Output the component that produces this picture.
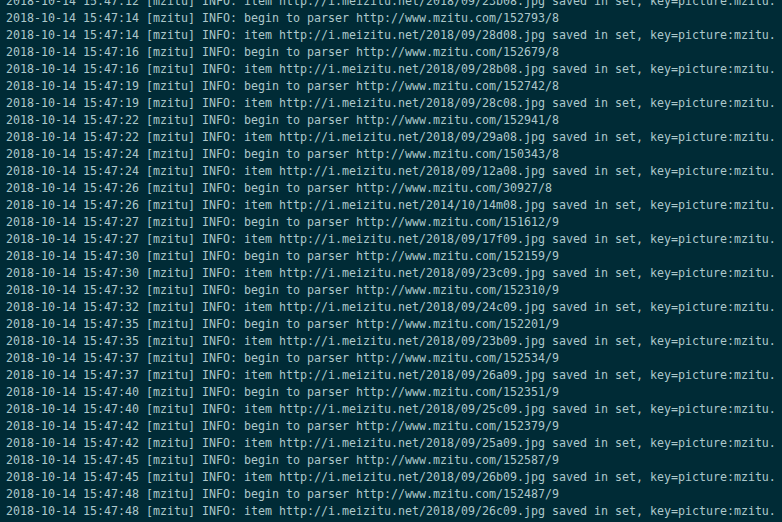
import React from "react";

type Entry = { time: string; begin: string; item: string };

// each pair: a "begin to parser" line followed by its "item ... saved" line
const entries: Entry[] = [
  { time: "15:47:14", begin: "152793/8", item: "2018/09/28d08" },
  { time: "15:47:16", begin: "152679/8", item: "2018/09/28b08" },
  { time: "15:47:19", begin: "152742/8", item: "2018/09/28c08" },
  { time: "15:47:22", begin: "152941/8", item: "2018/09/29a08" },
  { time: "15:47:24", begin: "150343/8", item: "2018/09/12a08" },
  { time: "15:47:26", begin: "30927/8", item: "2014/10/14m08" },
  { time: "15:47:27", begin: "151612/9", item: "2018/09/17f09" },
  { time: "15:47:30", begin: "152159/9", item: "2018/09/23c09" },
  { time: "15:47:32", begin: "152310/9", item: "2018/09/24c09" },
  { time: "15:47:35", begin: "152201/9", item: "2018/09/23b09" },
  { time: "15:47:37", begin: "152534/9", item: "2018/09/26a09" },
  { time: "15:47:40", begin: "152351/9", item: "2018/09/25c09" },
  { time: "15:47:42", begin: "152379/9", item: "2018/09/25a09" },
  { time: "15:47:45", begin: "152587/9", item: "2018/09/26b09" },
  { time: "15:47:48", begin: "152487/9", item: "2018/09/26c09" },
];

const prefix = (time: string) => `2018-10-14 ${time} [mzitu] INFO: `;
const itemLine = (time: string, path: string) =>
  `${prefix(time)}item http://i.meizitu.net/${path}.jpg saved in set, key=picture:mzitu.`;

const lines: string[] = [itemLine("15:47:12", "2018/09/23b08")];
entries.forEach((e) => {
  lines.push(`${prefix(e.time)}begin to parser http://www.mzitu.com/${e.begin}`);
  lines.push(itemLine(e.time, e.item));
});

export default function App() {
  return (
    <div className="h-screen w-full overflow-hidden bg-[#002b36]">
      <div
        className="-mt-[7px] pl-[6px] text-[11.63px] leading-[17px] text-[#adc8cb] whitespace-pre"
        style={{ fontFamily: '"DejaVu Sans Mono", "Liberation Mono", monospace' }}
      >
        {lines.map((line, i) => (
          <div key={i}>{line}</div>
        ))}
      </div>
    </div>
  );
}
